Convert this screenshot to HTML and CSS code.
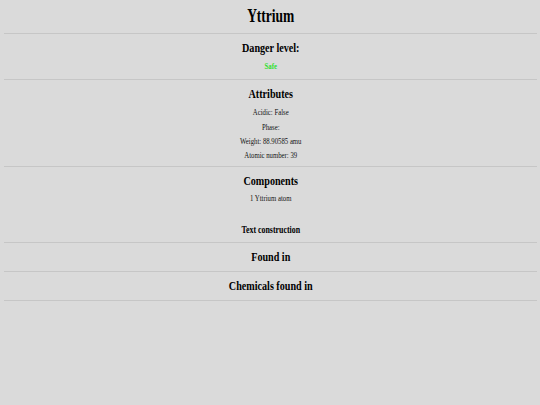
FILE: index.html
```html
<!DOCTYPE html>
<html lang="en">
<head>
    <meta charset="UTF-8">
    <meta name="viewport" content="width=device-width, initial-scale=1.0">
    <title>Yttrium</title>
    <link rel="stylesheet" href="styles.css">
</head>
<body>
    <div class="header">
        <h1 class="title">Yttrium</h1>
    </div>

    <!-- Danger -->
    <div class="section">
        <h2>Danger level:</h2>
        <div class="details">
            <p class="danger safe">Safe</p>
        </div>
    </div>

    <!-- Attributes -->
    <div class="section attributes">
        <h2>Attributes</h2>
        <div class="details">
            <p>Acidic: False</p>
            <p>Phase: </p>
            <p>Weight: 88.90585 amu</p>
            <p>Atomic number: 39</p>
        </div>
    </div>

    <!-- Components -->
    <div class="section">
        <h2>Components</h2>
        <div class="details components">
            <p>1 Yttrium atom</p>
        </div>
        <h3 class="subhead">Text construction</h3>
    </div>

    <div class="section">
        <h2>Found in</h2>
    </div>

    <div class="section">
        <h2>Chemicals found in</h2>
    </div>
</body>
</html>
```

FILE: styles.css
```css
/* General Styling */
body {
    margin: 0 3px 0 3.5px;
    padding: 0;
    font-family: 'Liberation Serif', 'Times New Roman', serif;
    background: #dadada;
    color: #000000;
    text-align: center;
}

/* text is drawn narrow, like the squeezed original */
h1, h2, h3, p {
    transform: scaleX(0.75);
}

.header {
    padding: 7px 0 8px;
    border-bottom: 1px solid #c6c6c6;
}

.title {
    font-size: 18px;
    line-height: 18px;
    margin: 0;
}

.section {
    padding: 7px 0;
    border-bottom: 1px solid #c6c6c6;
}

.section.attributes {
    padding-bottom: 6px;
}

h2 {
    font-size: 13.5px;
    line-height: 14px;
    margin: 0;
}

.details {
    display: flex;
    flex-direction: column;
    gap: 4px;
    margin-top: 6px;
}

.details.components {
    margin-top: 5px;
}

p {
    font-size: 9px;
    line-height: 10.3px;
    margin: 0;
    color: #111111;
}

.danger {
    font-weight: bold;
    line-height: 11.3px;
}

.safe {
    color: #2ee02e;
}

.subhead {
    font-size: 10.5px;
    line-height: 10px;
    margin: 21.7px 0 0;
}
```
